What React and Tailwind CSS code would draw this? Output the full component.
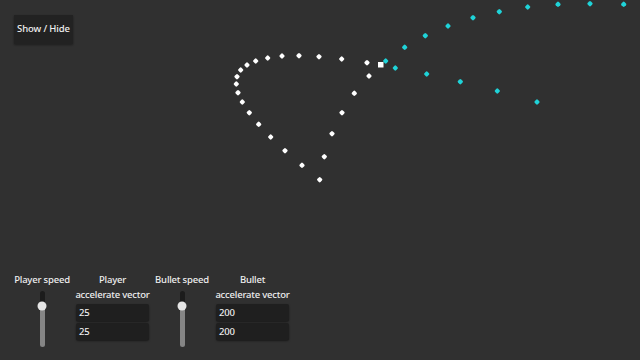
const WHITE_DOTS = [
  [255.7, 61], [267.7, 58], [282, 56], [299, 55.7], [319, 56.7], [341.7, 59], [367, 62.7],
  [369, 76], [354.3, 93.3], [342, 112.7], [332, 133.7], [324.3, 156.7], [319.7, 179.7],
  [302, 165.3], [285, 150.7], [270.7, 137], [258.7, 124.3], [249.3, 112.7], [242.3, 102],
  [238, 92.7], [236.3, 84], [237, 76.7], [240.7, 70], [247, 65],
]

const CYAN_DOTS = [
  [385.7, 61], [404.7, 47.3], [425.3, 35.7], [448, 26], [473, 17.7], [499.3, 11.7],
  [527.7, 7], [558, 4.3], [590, 3.7], [623.7, 4.3],
  [395.3, 68], [426.7, 74], [460.3, 81.7], [497.3, 91], [537, 102],
]

function Dot({ x, y, color }) {
  return <rect x={x - 2.2} y={y - 2.2} width="4.4" height="4.4" rx="1.2" fill={color} transform={`rotate(45 ${x} ${y})`} />
}

function Slider() {
  return (
    <div className="relative w-[5px] h-[56px] mt-[4px] rounded-full">
      <div className="h-[15px] bg-[#1c1c1c] rounded-t-full" />
      <div className="h-[41px] bg-[#858585] rounded-b-full" />
      <div className="absolute left-1/2 top-[15px] w-[9px] h-[9px] -translate-x-1/2 -translate-y-1/2 rounded-full bg-[#e6e6e6]" />
    </div>
  )
}

function VecInput({ value }) {
  return (
    <div className="h-[17px] w-[73px] bg-[#1f1f1f] shadow-[0_1px_2px_rgba(0,0,0,0.5)] rounded-[2px] px-[3px] flex items-center text-[9.5px] tracking-[-0.2px] text-[#eeeeee]">
      {value}
    </div>
  )
}

export default function App() {
  return (
    <div
      className="relative w-[640px] h-[360px] bg-[#303030] text-white overflow-hidden flex flex-col"
      style={{ fontFamily: '"Noto Sans", "Open Sans", sans-serif' }}
    >
      {/* canvas */}
      <svg className="absolute inset-0" width="640" height="360">
        {WHITE_DOTS.map(([x, y], i) => <Dot key={i} x={x} y={y} color="#ffffff" />)}
        {CYAN_DOTS.map(([x, y], i) => <Dot key={'c' + i} x={x} y={y} color="#1fd3d8" />)}
        <rect x="378" y="62" width="5.5" height="5.5" fill="#ffffff" />
      </svg>

      {/* toggle */}
      <div className="relative pt-[14px] pl-[14px]">
        <button className="h-[29px] w-[59px] bg-[#222222] text-[9.5px] tracking-[-0.1px] font-medium whitespace-nowrap text-[#f0f0f0] shadow-[0_1px_2px_rgba(0,0,0,0.4)]">
          Show / Hide
        </button>
      </div>

      <div className="flex-1" />

      {/* controls */}
      <div className="relative flex items-start pl-[14px] pb-[13px] gap-[6px] text-[9.5px] tracking-[-0.2px] font-medium leading-[15px] text-[#eeeeee] whitespace-nowrap text-center">
        <div className="w-[56px] flex flex-col items-center">
          <div>Player speed</div>
          <Slider />
        </div>
        <div className="w-[73px] flex flex-col items-center">
          <div>Player</div>
          <div>accelerate vector</div>
          <div className="flex flex-col gap-[2px] mt-[2px] text-left">
            <VecInput value="25" />
            <VecInput value="25" />
          </div>
        </div>
        <div className="w-[54px] flex flex-col items-center">
          <div>Bullet speed</div>
          <Slider />
        </div>
        <div className="w-[75px] flex flex-col items-center">
          <div>Bullet</div>
          <div>accelerate vector</div>
          <div className="flex flex-col gap-[2px] mt-[2px] text-left">
            <VecInput value="200" />
            <VecInput value="200" />
          </div>
        </div>
      </div>
    </div>
  )
}
